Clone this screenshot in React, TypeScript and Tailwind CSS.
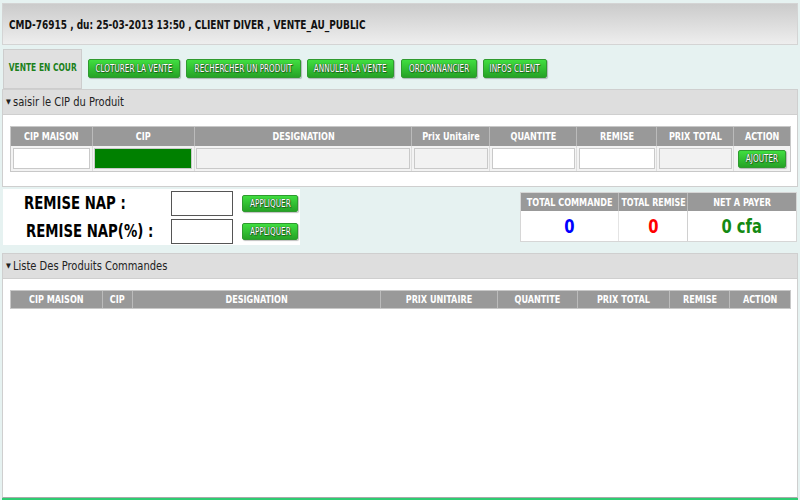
import React from "react";

const cond = { fontFamily: '"DejaVu Sans Condensed", "DejaVu Sans", sans-serif' };

function GreenBtn({ label, className = "" }: { label: string; className?: string }) {
  return (
    <div
      className={`flex items-center justify-center overflow-visible whitespace-nowrap rounded-[2px] border border-[#2f9a2f] bg-gradient-to-b from-[#40de40] to-[#26a326] text-white text-[10.5px] leading-none [text-shadow:0_0_1px_#1d4d1d,0_0_1px_#1d4d1d,1px_1px_1px_#1f5f1f] shadow-[1px_1px_1px_rgba(0,0,0,0.25)] ${className}`}
      style={cond}
    >
      <span className="inline-block scale-x-[0.77]">{label}</span>
    </div>
  );
}

function SectionHeader({ title }: { title: string }) {
  return (
    <div className="flex items-center h-[25px] bg-[#dedede] border-b border-[#cfcfcf] px-[3px] text-[12px] text-[#222] whitespace-nowrap" style={cond}>
      <span className="text-[7px] mr-[2px]">▼</span>
      <span className="inline-block scale-x-[0.92] origin-left">{title}</span>
    </div>
  );
}

function HeadCell({ n, w, first }: { n: string; w: number; first: boolean }) {
  return (
    <div
      className={`flex items-center justify-center whitespace-nowrap text-white text-[10px] font-bold ${first ? "" : "border-l border-[#bbbbbb]"}`}
      style={{ width: w }}
    >
      <span className="inline-block scale-x-[0.9]">{n}</span>
    </div>
  );
}

export default function App() {
  const t1 = [
    ["CIP MAISON", 81],
    ["CIP", 102],
    ["DESIGNATION", 218],
    ["Prix Unitaire", 78],
    ["QUANTITE", 87],
    ["REMISE", 80],
    ["PRIX TOTAL", 77],
    ["ACTION", 57],
  ] as const;
  const t2 = [
    ["CIP MAISON", 91],
    ["CIP", 30],
    ["DESIGNATION", 248],
    ["PRIX UNITAIRE", 118],
    ["QUANTITE", 80],
    ["PRIX TOTAL", 92],
    ["REMISE", 60],
    ["ACTION", 61],
  ] as const;

  return (
    <div className="w-[800px] h-[500px] bg-[#e6f2f1] overflow-hidden pt-[3px] px-[2px]" style={cond}>
      {/* Header */}
      <div className="h-[42px] border border-[#d4d4d4] bg-gradient-to-b from-[#cbcbcb] to-[#eeeeee] flex items-center pl-[6px] pt-[2px] text-[12px] font-bold text-[#111] whitespace-nowrap">
        <span className="inline-block scale-x-[0.83] origin-left">
          CMD-76915 , du: 25-03-2013 13:50 , CLIENT DIVER , VENTE_AU_PUBLIC
        </span>
      </div>

      {/* Tabs */}
      <div className="flex items-center h-[41px] mt-[3px]">
        <div className="w-[79px] h-[40px] ml-[1px] bg-[#e0e0e0] border border-[#cdcdcd] flex items-center justify-center whitespace-nowrap text-[11px] font-bold text-[#1b801b]">
          <span className="inline-block scale-x-[0.76]">VENTE EN COUR</span>
        </div>
        <GreenBtn label="CLOTURER LA VENTE" className="ml-[6px] w-[92px] h-[19px]" />
        <GreenBtn label="RECHERCHER UN PRODUIT" className="ml-[6px] w-[115px] h-[19px]" />
        <GreenBtn label="ANNULER LA VENTE" className="ml-[6px] w-[87px] h-[19px]" />
        <GreenBtn label="ORDONNANCIER" className="ml-[7px] w-[76px] h-[19px]" />
        <GreenBtn label="INFOS CLIENT" className="ml-[6px] w-[64px] h-[19px]" />
      </div>

      {/* Section 1 */}
      <div className="border border-[#cfcfcf] bg-white h-[98px]">
        <SectionHeader title="saisir le CIP du Produit" />
        <div className="pt-[11px] pl-[7px]">
          <div className="w-[781px] border border-[#c8c8c8]">
            <div className="flex h-[19px] bg-[#999999]">
              {t1.map(([n, w], i) => (
                <HeadCell key={n} n={n} w={w} first={i === 0} />
              ))}
            </div>
            <div className="flex h-[25px] bg-[#f3f3f3]">
              {t1.map(([n, w], i) => (
                <div key={n} className={`flex items-center justify-center ${i > 0 ? "border-l border-[#dddddd]" : ""}`} style={{ width: w }}>
                  {i === 7 ? (
                    <GreenBtn label="AJOUTER" className="w-[48px] h-[18px]" />
                  ) : (
                    <div
                      className={`h-[21px] border border-[#c9c9c9] ${
                        i === 1 ? "bg-[#008000]" : i === 0 || i === 4 || i === 5 ? "bg-white" : "bg-[#f2f2f2]"
                      }`}
                      style={{ width: w - 4 }}
                    />
                  )}
                </div>
              ))}
            </div>
          </div>
        </div>
      </div>

      {/* Remise / totals */}
      <div className="flex h-[66px] pt-[2px]">
        <div className="w-[297px] h-[56px] bg-white ml-[1px] flex flex-col">
          <div className="flex items-center h-[28px]">
            <div className="w-[168px] pl-[21px] text-[18px] font-bold text-black leading-none whitespace-nowrap">
              <span className="inline-block scale-x-[0.82] origin-left">REMISE NAP :</span>
            </div>
            <div className="w-[62px] h-[25px] border border-[#555] bg-white" />
            <GreenBtn label="APPLIQUER" className="ml-[9px] w-[56px] h-[17px]" />
          </div>
          <div className="flex items-center h-[28px]">
            <div className="w-[168px] pl-[23px] text-[18px] font-bold text-black leading-none whitespace-nowrap">
              <span className="inline-block scale-x-[0.82] origin-left">REMISE NAP(%) :</span>
            </div>
            <div className="w-[62px] h-[25px] border border-[#555] bg-white" />
            <GreenBtn label="APPLIQUER" className="ml-[9px] w-[56px] h-[17px]" />
          </div>
        </div>
        <div className="ml-auto mr-[1px] mt-[3px] w-[277px] h-[50px] border border-[#d6d6d6] bg-white flex flex-col">
          <div className="flex h-[19px] bg-[#999999] text-white text-[10px] font-bold whitespace-nowrap">
            <div className="w-[97px] flex items-center justify-center">
              <span className="inline-block scale-x-[0.9]">TOTAL COMMANDE</span>
            </div>
            <div className="w-[69px] flex items-center justify-center border-l border-[#bbbbbb]">
              <span className="inline-block scale-x-[0.88]">TOTAL REMISE</span>
            </div>
            <div className="flex-1 flex items-center justify-center border-l border-[#bbbbbb]">
              <span className="inline-block scale-x-[0.9]">NET A PAYER</span>
            </div>
          </div>
          <div className="flex flex-1 text-[20px] font-bold">
            <div className="w-[97px] flex items-center justify-center text-[#0000ff]">
              <span className="inline-block scale-x-[0.82]">0</span>
            </div>
            <div className="w-[69px] flex items-center justify-center text-[#ff0000] border-l border-[#e4e4e4]">
              <span className="inline-block scale-x-[0.82]">0</span>
            </div>
            <div className="flex-1 flex items-center justify-center text-[#138a13] border-l border-[#d0d0d0]">
              <span className="inline-block scale-x-[0.82]">0 cfa</span>
            </div>
          </div>
        </div>
      </div>

      {/* Section 2 */}
      <div className="border border-[#cfcfcf] bg-white h-[245px] border-b-[#aaaaaa]">
        <SectionHeader title="Liste Des Produits Commandes" />
        <div className="pt-[11px] pl-[7px]">
          <div className="w-[781px] flex h-[19px] bg-[#999999] border border-[#c8c8c8]">
            {t2.map(([n, w], i) => (
              <HeadCell key={n} n={n} w={w} first={i === 0} />
            ))}
          </div>
        </div>
      </div>
      <div className="h-[2px] bg-[#2ecc71]" />
    </div>
  );
}
